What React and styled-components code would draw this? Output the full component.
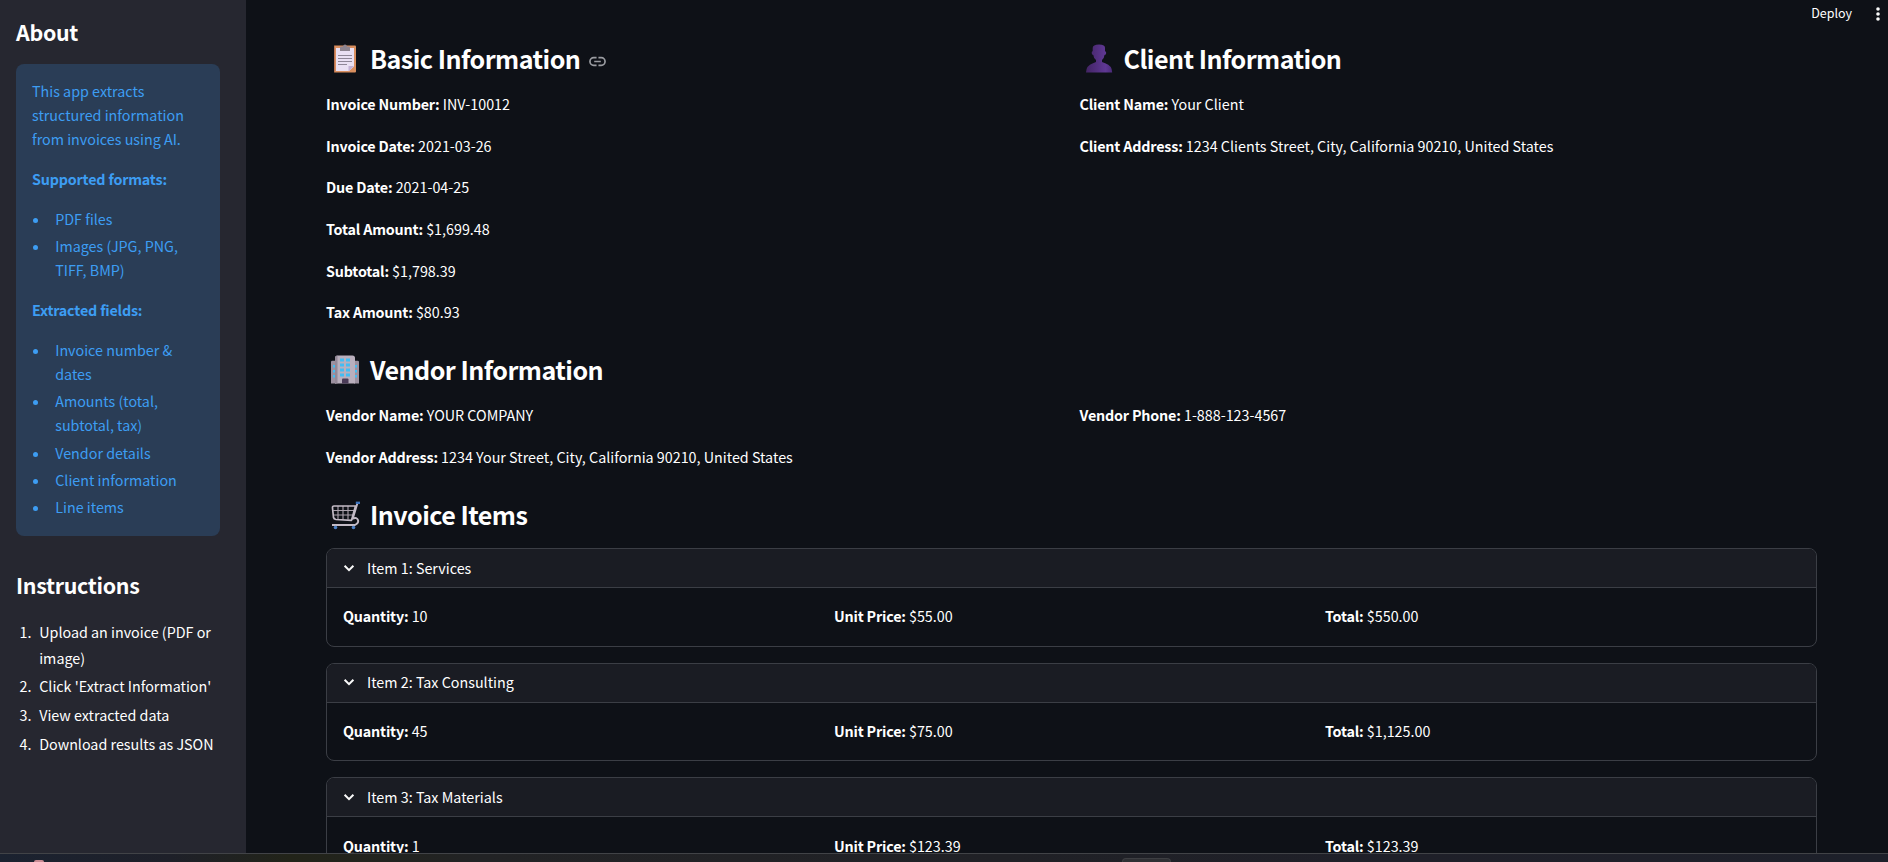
import React from 'react';
import styled, { createGlobalStyle } from 'styled-components';

const Global = createGlobalStyle`
  *, *::before, *::after { box-sizing: border-box; }
  html, body { margin: 0; height: 100%; overflow: hidden; background: #0e1117; }
  body {
    font-family: "Noto Sans CJK SC", "Noto Sans", sans-serif;
    font-size: 14.32px;
    line-height: 25.6px;
    color: #fff;
  }
  strong { letter-spacing: -0.18px; }
`;

const Screen = styled.div`
  height: 862px;
  display: flex;
  flex-direction: column;
  overflow: hidden;
`;

const Page = styled.div`
  height: 853px;
  flex: none;
  display: flex;
  overflow: hidden;
`;

const Sidebar = styled.aside`
  width: 246px;
  flex: none;
  padding: 17px 26px 0 16px;
  background: #262730;
`;

const SideTitle = styled.h2`
  margin: 0;
  font-size: 21.4px;
  line-height: 29px;
  font-weight: 600;
  letter-spacing: -0.3px;
`;

const InfoBox = styled.div`
  margin: 18px 0 34.4px;
  padding: 15px 16px 17px;
  border-radius: 8px;
  background: #2a3d56;
  color: #3d9df3;
  line-height: 24px;
`;

const InfoText = styled.p`
  margin: 0 0 16px;
`;

const BulletList = styled.ul`
  margin: 0 0 ${(p) => (p.$last ? 0 : 16)}px;
  padding: 0;
  list-style: none;
  display: flex;
  flex-direction: column;
  gap: 3.2px;
`;

const Bullet = styled.li`
  display: grid;
  grid-template-columns: 23.2px 1fr;
  &::before {
    content: "";
    width: 5px;
    height: 5px;
    margin: 11px 0 0 1px;
    border-radius: 50%;
    background: currentColor;
  }
`;

const StepList = styled.ol`
  margin: 19.6px 0 0;
  padding: 0;
  list-style: none;
  display: flex;
  flex-direction: column;
  gap: 3.2px;
`;

const Step = styled.li`
  display: grid;
  grid-template-columns: 15.5px 1fr;
  column-gap: 7.7px;
  white-space: nowrap;
`;

const StepNumber = styled.span`
  text-align: right;
`;

const Main = styled.main`
  position: relative;
  flex: 1;
  padding: 41px 71px 0 80px;
`;

const TopActions = styled.div`
  position: absolute;
  top: 0;
  right: 0;
  height: 28px;
  padding-right: 8px;
  display: flex;
  align-items: center;
  gap: 24px;
  font-size: 12.5px;
`;

const DeployLabel = styled.span`
  margin-top: -2px;
`;

const Columns = styled.div`
  display: grid;
  grid-template-columns: repeat(${(p) => p.$count}, 1fr);
  column-gap: 16px;
`;

const Heading = styled.h3`
  margin: 0;
  height: 34px;
  display: flex;
  align-items: center;
  font-size: 25.07px;
  line-height: 34px;
  font-weight: 600;
  letter-spacing: -0.52px;
  white-space: nowrap;
`;

const Emoji = styled.svg`
  width: 30px;
  height: 30px;
  flex: none;
  margin: 0 10px 0 4px;
  overflow: visible;
`;

const LinkIcon = styled.svg`
  width: 17px;
  height: 17px;
  margin: 7px 0 0 9px;
`;

const Fields = styled.div`
  display: flex;
  flex-direction: column;
  gap: 16px;
  padding-top: 16.3px;
`;

const FieldLine = styled.p`
  margin: 0;
  white-space: nowrap;
`;

const Block = styled.section`
  margin-top: ${(p) => p.$gap}px;
`;

const Items = styled.div`
  display: flex;
  flex-direction: column;
  gap: 16px;
  margin-top: 17.4px;
`;

const Expander = styled.article`
  height: 98.6px;
  flex: none;
  border: 1px solid #3b3e45;
  border-radius: 8px;
  overflow: hidden;
`;

const Summary = styled.header`
  height: 39px;
  display: flex;
  align-items: center;
  gap: 11px;
  padding: 0 0 1px 15px;
  border-bottom: 1px solid #3b3e45;
  background: #1a1c23;
`;

const ItemBody = styled.div`
  padding: 15.2px 16px 0;
`;

const Taskbar = styled.footer`
  height: 9px;
  flex: none;
  display: flex;
  align-items: flex-end;
  border-top: 1px solid #414347;
  background: linear-gradient(90deg, #1b2230 0, #1e2029 170px, #222419 290px, #222325 480px, #202126 1000px, #1f2029 1400px, #1d202a 100%);
`;

const TaskbarIcon = styled.span`
  width: 10px;
  height: 2px;
  margin-left: 34px;
  border-radius: 5px 5px 0 0;
  background: #c98b93;
`;

const TaskbarTab = styled.span`
  width: 49px;
  height: 4px;
  margin-left: 1078px;
  border: 1px solid #3d3e42;
  border-bottom: 0;
  border-radius: 4px 4px 0 0;
  background: #2f3034;
`;

const ClipboardEmoji = () => (
  <Emoji viewBox="0 0 30 30">
    <rect x="4" y="2.500" width="22" height="27" rx="1" fill="#d98f5f" />
    <path d="M4 3.500q0-1 1-1v27q-1 0-1-1z" fill="#b87352" />
    <path d="M6 5h18v18.500L19 28H6z" fill="#e9e0f3" />
    <path d="M18.500 28.500V23H24z" fill="#c3b2d6" />
    <path d="M10 8V4.500q0-1 1-1h2q.3-2 2-2t2 2h2q1 0 1 1V8z" fill="#8d8490" />
    <path d="M8 12.500h14M8 15.500h14M8 18.500h14M8 21.500h9" stroke="#8f8798" strokeWidth="1" />
  </Emoji>
);

const PersonEmoji = () => (
  <Emoji viewBox="0 0 30 30">
    <defs>
      <linearGradient id="person" x1="0" x2="1" y1="0" y2="0">
        <stop offset="0" stopColor="#422463" />
        <stop offset="0.750" stopColor="#5f3894" />
        <stop offset="1" stopColor="#4a2b78" />
      </linearGradient>
    </defs>
    <path d="M2 29.500q0-7 7-9.300l3-1.200v-2q-2.500-2-2.700-5-1.500 0-1.600-1.900t1-1.800V5q0-3.500 6.300-3.500T21 5v3.300q1.300 0 1.200 1.800t-1.700 1.900q-.2 3-2.500 5v2l3.200 1.200q7 2.300 7 9.300z" fill="url(#person)" />
  </Emoji>
);

const BuildingEmoji = () => (
  <Emoji viewBox="0 0 30 30">
    <path d="M1 8q0-1.300 1.300-1.300H6v22.800H1zM29 8q0-1.300-1.300-1.300H24v22.800h5z" fill="#9c91a0" />
    <path d="M5 4q0-2.500 2.500-2.500h15Q25 1.500 25 4v25.500H5z" fill="#b9afbd" />
    <path d="M5 4q0-2.500 2.500-2.500V29.500H5z" fill="#948998" />
    <path d="M10 4.500h4v3h-4zM16 4.500h4v3h-4zM10 9.500h4v3h-4zM16 9.500h4v3h-4zM10 14.500h4v3h-4zM16 14.500h4v3h-4zM10 19.500h4v3h-4zM16 19.500h4v3h-4zM3 11h2v2.500H3zM3 16h2v2.500H3zM3 21h2v2.500H3zM25 11h2v2.500h-2zM25 16h2v2.500h-2zM25 21h2v2.500h-2z" fill="#43bdf3" />
    <path d="M12 29.500V25.500q0-1 1-1h4.500q1 0 1 1v4z" fill="#4b3c58" />
  </Emoji>
);

const CartEmoji = () => (
  <Emoji viewBox="0 -1.500 30 30" fill="none">
    <path d="M3.200 10h21M3.700 14.500H23M8 5.500V19M13 5.500V19M18 5.500V19" stroke="#aaa2ac" strokeWidth="1.100" />
    <path d="M25.500 5.500H4Q2.300 5.500 2.500 7.500L3.500 17q.3 1.700 2.500 2l15.500.8z" stroke="#c3bbc6" strokeWidth="1.700" strokeLinejoin="round" />
    <path d="M27.500 2.500 22.800 18q4.200-1.500 5.200 1.600T25 24.500H2" stroke="#c3bbc6" strokeWidth="1.900" />
    <path d="M25.800 2.300H30" stroke="#3d74bd" strokeWidth="2.400" />
    <circle cx="5.500" cy="27" r="1.800" fill="#4b7fc4" />
    <circle cx="23.500" cy="27" r="1.800" fill="#4b7fc4" />
  </Emoji>
);

const Chevron = () => (
  <svg width="14" height="14" viewBox="0 0 14 14" fill="none" stroke="#fafafa" strokeWidth="2">
    <path d="M2.600 4.800 7 9.200l4.400-4.400" />
  </svg>
);

const Field = ({ label, children }) => (
  <FieldLine>
    <strong>{label}:</strong> {children}
  </FieldLine>
);

const items = [
  { title: 'Item 1: Services', quantity: '10', price: '$55.00', total: '$550.00' },
  { title: 'Item 2: Tax Consulting', quantity: '45', price: '$75.00', total: '$1,125.00' },
  { title: 'Item 3: Tax Materials', quantity: '1', price: '$123.39', total: '$123.39' },
];

const steps = [
  <>Upload an invoice (PDF or<br />image)</>,
  "Click 'Extract Information'",
  'View extracted data',
  'Download results as JSON',
];

export default function App() {
  return (
    <Screen>
      <Global />
      <Page>
        <Sidebar>
          <SideTitle>About</SideTitle>
          <InfoBox>
            <InfoText>This app extracts<br />structured information<br />from invoices using AI.</InfoText>
            <InfoText><strong>Supported formats:</strong></InfoText>
            <BulletList>
              <Bullet>PDF files</Bullet>
              <Bullet><span>Images (JPG, PNG,<br />TIFF, BMP)</span></Bullet>
            </BulletList>
            <InfoText><strong>Extracted fields:</strong></InfoText>
            <BulletList $last>
              <Bullet><span>Invoice number &amp;<br />dates</span></Bullet>
              <Bullet><span>Amounts (total,<br />subtotal, tax)</span></Bullet>
              <Bullet>Vendor details</Bullet>
              <Bullet>Client information</Bullet>
              <Bullet>Line items</Bullet>
            </BulletList>
          </InfoBox>
          <SideTitle>Instructions</SideTitle>
          <StepList>
            {steps.map((step, i) => (
              <Step key={i}>
                <StepNumber>{i + 1}.</StepNumber>
                <span>{step}</span>
              </Step>
            ))}
          </StepList>
        </Sidebar>
        <Main>
          <TopActions>
            <DeployLabel>Deploy</DeployLabel>
            <svg width="4" height="16" viewBox="0 0 4 16" fill="#fafafa">
              <circle cx="2" cy="3" r="1.800" />
              <circle cx="2" cy="8" r="1.800" />
              <circle cx="2" cy="13" r="1.800" />
            </svg>
          </TopActions>
          <Columns $count={2}>
            <div>
              <Heading>
                <ClipboardEmoji />
                Basic Information
                <LinkIcon viewBox="0 0 18 18" fill="none" stroke="#9a9ca1" strokeWidth="1.800">
                  <path d="M8 5H5a4 4 0 0 0 0 8h3M10 5h3a4 4 0 0 1 0 8h-3M5.500 9h7" />
                </LinkIcon>
              </Heading>
              <Fields>
                <Field label="Invoice Number">INV-10012</Field>
                <Field label="Invoice Date">2021-03-26</Field>
                <Field label="Due Date">2021-04-25</Field>
                <Field label="Total Amount">$1,699.48</Field>
                <Field label="Subtotal">$1,798.39</Field>
                <Field label="Tax Amount">$80.93</Field>
              </Fields>
            </div>
            <div>
              <Heading><PersonEmoji />Client Information</Heading>
              <Fields>
                <Field label="Client Name">Your Client</Field>
                <Field label="Client Address">1234 Clients Street, City, California 90210, United States</Field>
              </Fields>
            </div>
          </Columns>
          <Block $gap={27.3}>
            <Heading><BuildingEmoji />Vendor Information</Heading>
            <Columns $count={2}>
              <Fields>
                <Field label="Vendor Name">YOUR COMPANY</Field>
                <Field label="Vendor Address">1234 Your Street, City, California 90210, United States</Field>
              </Fields>
              <Fields>
                <Field label="Vendor Phone">1-888-123-4567</Field>
              </Fields>
            </Columns>
          </Block>
          <Block $gap={27.1}>
            <Heading><CartEmoji />Invoice Items</Heading>
            <Items>
              {items.map((item) => (
                <Expander key={item.title}>
                  <Summary><Chevron />{item.title}</Summary>
                  <ItemBody>
                    <Columns $count={3}>
                      <Field label="Quantity">{item.quantity}</Field>
                      <Field label="Unit Price">{item.price}</Field>
                      <Field label="Total">{item.total}</Field>
                    </Columns>
                  </ItemBody>
                </Expander>
              ))}
            </Items>
          </Block>
        </Main>
      </Page>
      <Taskbar>
        <TaskbarIcon />
        <TaskbarTab />
      </Taskbar>
    </Screen>
  );
}
